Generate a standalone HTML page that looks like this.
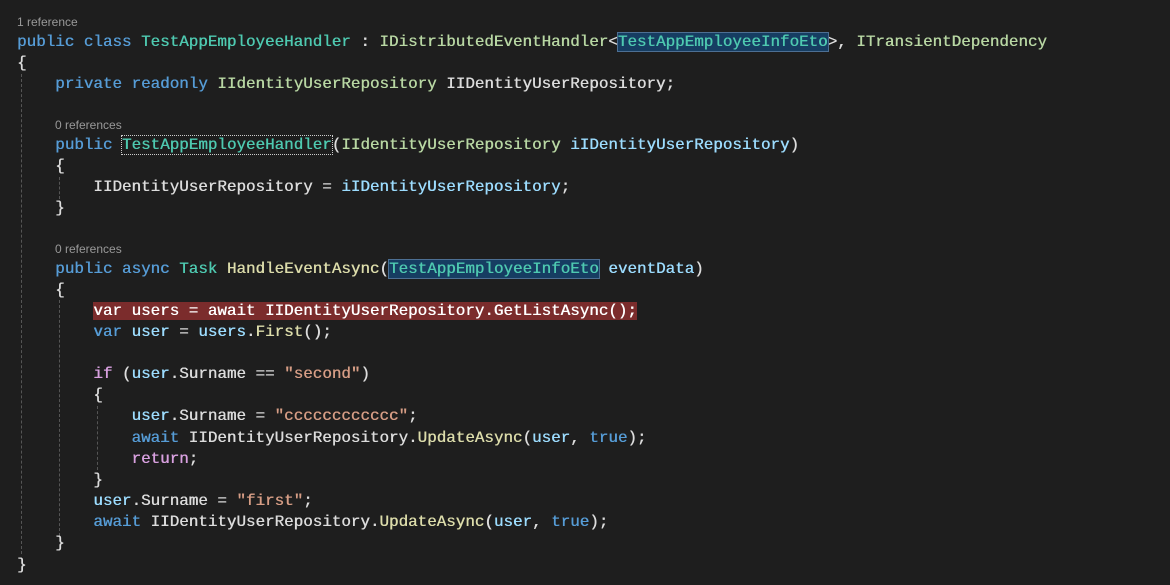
<!DOCTYPE html>
<html><head><meta charset="utf-8"><style>
body{margin:0;width:1170px;height:585px;background:#1e1e1e;overflow:hidden;position:relative;font-family:"Liberation Mono",monospace;font-size:15.9px;color:#dcdcdc}
.l{position:absolute;left:17px;height:21px;line-height:21px;white-space:pre;text-shadow:0.4px 0 0 currentColor}
.r{position:absolute;height:16px;line-height:16px;font-family:"Liberation Sans",sans-serif;font-size:12px;color:#999}
.k{color:#569cd6}.t{color:#4ec9b0}.i{color:#b8d7a3}.v{color:#9cdcfe}.m{color:#dcdcaa}.s{color:#d69d85}.c{color:#d8a0df}
.sel{background:#163d62;outline:1px solid #4d6f93}
.dot{outline:1px dotted #ccc}
.hl{background:#7b2c2c;color:#fff}
.g{position:absolute;width:0;border-left:1px dashed #555}
</style></head><body>
<div class="g" style="left:21px;top:74px;height:480px"></div>
<div class="g" style="left:59px;top:177px;height:22px"></div>
<div class="g" style="left:59px;top:300px;height:236px"></div>
<div class="g" style="left:97px;top:406px;height:64px"></div>
<div class="r" style="left:17px;top:14px">1 reference</div>
<div class="l" style="top:32px"><span class="k">public class </span><span class="t">TestAppEmployeeHandler</span> : <span class="i">IDistributedEventHandler</span>&lt;<span class="t sel">TestAppEmployeeInfoEto</span>&gt;, <span class="i">ITransientDependency</span></div>
<div class="l" style="top:53px">{</div>
<div class="l" style="top:74px">    <span class="k">private readonly </span><span class="i">IIdentityUserRepository</span> IIDentityUserRepository;</div>
<div class="r" style="left:55px;top:117px">0 references</div>
<div class="l" style="top:135px">    <span class="k">public </span><span class="t dot">TestAppEmployeeHandler</span>(<span class="i">IIdentityUserRepository</span> <span class="v">iIDentityUserRepository</span>)</div>
<div class="l" style="top:156px">    {</div>
<div class="l" style="top:177px">        IIDentityUserRepository = <span class="v">iIDentityUserRepository</span>;</div>
<div class="l" style="top:198px">    }</div>
<div class="r" style="left:55px;top:241px">0 references</div>
<div class="l" style="top:259px">    <span class="k">public async </span><span class="t">Task</span> <span class="m">HandleEventAsync</span>(<span class="t sel">TestAppEmployeeInfoEto</span> <span class="v">eventData</span>)</div>
<div class="l" style="top:280px">    {</div>
<div class="l" style="top:301px">        <span class="hl">var users = await IIDentityUserRepository.GetListAsync();</span></div>
<div class="l" style="top:322px">        <span class="k">var</span> <span class="v">user</span> = <span class="v">users</span>.<span class="m">First</span>();</div>
<div class="l" style="top:364px">        <span class="c">if</span> (<span class="v">user</span>.Surname == <span class="s">"second"</span>)</div>
<div class="l" style="top:385px">        {</div>
<div class="l" style="top:406px">            <span class="v">user</span>.Surname = <span class="s">"cccccccccccc"</span>;</div>
<div class="l" style="top:428px">            <span class="k">await</span> IIDentityUserRepository.<span class="m">UpdateAsync</span>(<span class="v">user</span>, <span class="k">true</span>);</div>
<div class="l" style="top:449px">            <span class="c">return</span>;</div>
<div class="l" style="top:470px">        }</div>
<div class="l" style="top:491px">        <span class="v">user</span>.Surname = <span class="s">"first"</span>;</div>
<div class="l" style="top:512px">        <span class="k">await</span> IIDentityUserRepository.<span class="m">UpdateAsync</span>(<span class="v">user</span>, <span class="k">true</span>);</div>
<div class="l" style="top:533px">    }</div>
<div class="l" style="top:555px">}</div>
</body></html>
